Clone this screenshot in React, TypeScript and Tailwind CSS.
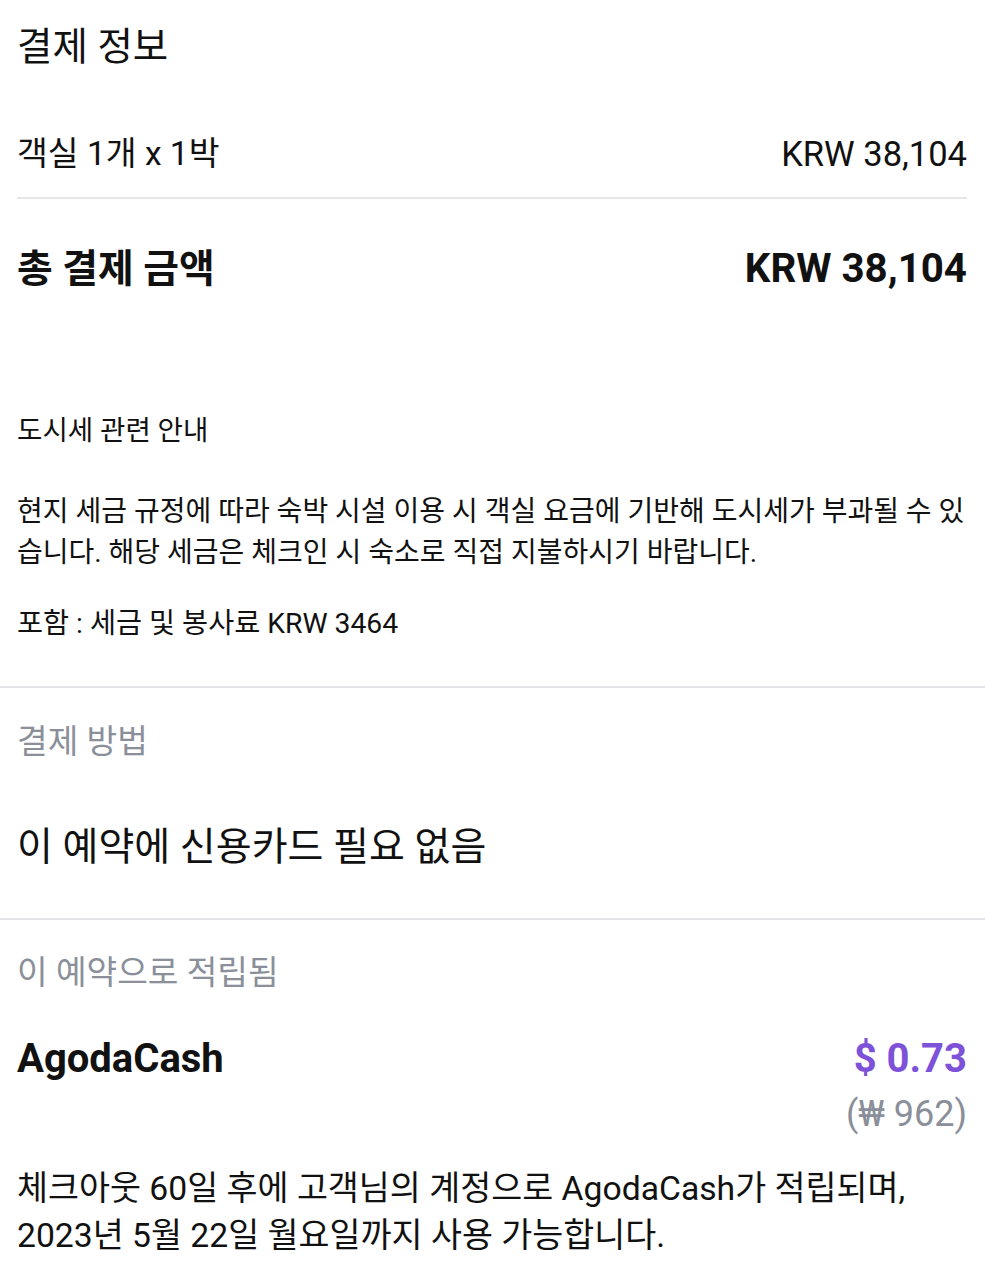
const FONT = "font-['Roboto','Noto_Sans_CJK_KR',sans-serif]";

const Divider = ({ inset = false }: { inset?: boolean }) => (
  <div className={inset ? 'h-[2px] bg-[#e6e6ea]' : 'h-[2px] bg-[#e5e5e7]'} />
);

export default function App() {
  return (
    <div className={`${FONT} w-[985px] bg-white text-[#111] pb-10`}>
      {/* Payment info */}
      <section className="pl-[17px] pr-[18px] pt-[19px]">
        <h1 className="text-[38.5px] leading-[56px] font-normal">결제 정보</h1>

        <div className="mt-[55px] flex items-center justify-between leading-[48px]">
          <span className="text-[33.5px]">객실 1개 x 1박</span>
          <span className="text-[34.5px]">KRW 38,104</span>
        </div>

        <div className="mt-[19px]">
          <Divider inset />
        </div>

        <div className="mt-[42px] flex items-center justify-between leading-[56px] font-bold">
          <span className="text-[38.8px]">총 결제 금액</span>
          <span className="text-[40.3px]">KRW 38,104</span>
        </div>

        <p className="mt-[114px] text-[27.6px] leading-[40px]">도시세 관련 안내</p>

        <p className="mt-[41px] text-[28px] leading-[40.5px]">
          현지 세금 규정에 따라 숙박 시설 이용 시 객실 요금에 기반해 도시세가 부과될 수 있습니다. 해당 세금은 체크인 시 숙소로 직접 지불하시기 바랍니다.
        </p>

        <p className="mt-[31px] text-[28.3px] leading-[40px]">포함 : 세금 및 봉사료 KRW 3464</p>
      </section>

      <div className="mt-[42px]">
        <Divider />
      </div>

      {/* Payment method */}
      <section className="px-[17px]">
        <p className="mt-[32px] text-[33.3px] leading-[44px] text-[#8a8f99]">결제 방법</p>
        <p className="mt-[57px] text-[39px] leading-[52px]">이 예약에 신용카드 필요 없음</p>
      </section>

      <div className="mt-[45px]">
        <Divider />
      </div>

      {/* Rewards */}
      <section className="pl-[17px] pr-[18px]">
        <p className="mt-[31px] text-[33.3px] leading-[44px] text-[#8a8f99]">이 예약으로 적립됨</p>

        <div className="mt-[38px] flex items-center justify-between leading-[52px] font-bold">
          <span className="text-[40px]">AgodaCash</span>
          <span className="text-[40px] text-[#7d52d9]">$ 0.73</span>
        </div>

        <div className="mt-[7px] flex justify-end">
          <span className="text-[36px] leading-[44px] text-[#8a8f99]">(₩ 962)</span>
        </div>

        <p className="mt-[30px] text-[33.7px] leading-[46.5px]">
          체크아웃 60일 후에 고객님의 계정으로 AgodaCash가 적립되며,
          <br />
          2023년 5월 22일 월요일까지 사용 가능합니다.
        </p>
      </section>
    </div>
  );
}
